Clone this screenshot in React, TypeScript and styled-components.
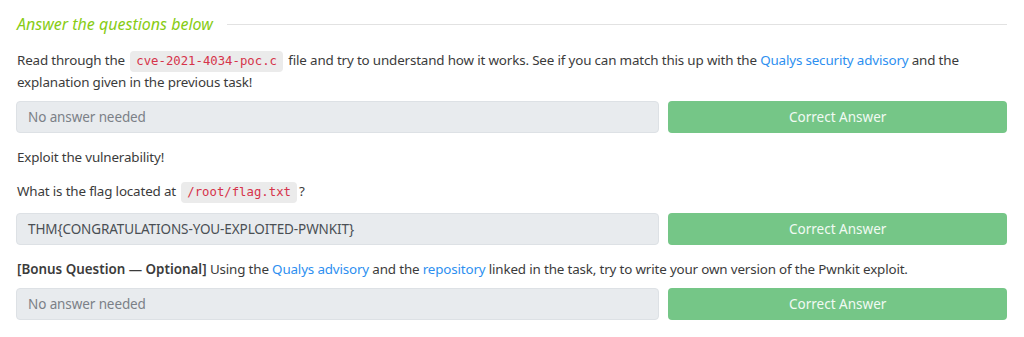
import React from "react";
import styled, { createGlobalStyle } from "styled-components";

const GlobalStyle = createGlobalStyle`
  body {
    margin: 0;
    background: #ffffff;
    font-family: "Noto Sans", "Open Sans", sans-serif;
    color: #3b3b3b;
  }
`;

const Wrapper = styled.div`
  padding: 14px 17px 0 16px;
`;

const HeadingRow = styled.div`
  display: flex;
  align-items: center;
  gap: 14px;
  height: 20px;
  margin-bottom: 15px;
`;

const Heading = styled.h5`
  margin: 0 0 0 1px;
  font-size: 16px;
  font-weight: 400;
  font-style: italic;
  color: #88cc14;
  white-space: nowrap;
`;

const Rule = styled.div`
  flex: 1;
  height: 1px;
  background: #e2e2e2;
`;

const Question = styled.p<{ $gap?: number }>`
  margin: 0 0 ${(p) => (p.$gap ?? 9)}px 1px;
  font-size: 13.4px;
  letter-spacing: -0.16px;
  line-height: 22px;
`;

const Strong = styled.span`
  font-weight: 600;
  letter-spacing: 0;
`;

const Code = styled.code`
  font-family: "DejaVu Sans Mono", "Liberation Mono", monospace;
  font-size: 12.3px;
  letter-spacing: 0;
  line-height: 1;
  color: #d6334a;
  background: #ebebeb;
  border-radius: 4px;
  padding: 3px 6px 4px;
  margin: 0 2px;
`;

const Link = styled.a`
  color: #2d8ff0;
  text-decoration: none;
`;

const AnswerRow = styled.div`
  display: grid;
  grid-template-columns: minmax(0, 1.9fr) minmax(0, 1fr);
  gap: 9px;
  margin-bottom: 13px;
`;

const AnswerBox = styled.div<{ $filled?: boolean }>`
  height: 32px;
  box-sizing: border-box;
  display: flex;
  align-items: center;
  padding: 0 11px;
  background: #e8ebee;
  border: 1px solid #dde1e5;
  border-radius: 4px;
  font-size: 13.5px;
  letter-spacing: -0.1px;
  color: ${(p) => (p.$filled ? "#4a4f54" : "#7b8087")};
`;

const CorrectButton = styled.div`
  height: 32px;
  display: flex;
  align-items: center;
  justify-content: center;
  background: #75c687;
  border-radius: 4px;
  font-size: 13.5px;
  color: #f1faf3;
`;

function Answer({ value, filled }: { value: string; filled?: boolean }) {
  return (
    <AnswerRow>
      <AnswerBox $filled={filled}>{value}</AnswerBox>
      <CorrectButton>Correct Answer</CorrectButton>
    </AnswerRow>
  );
}

export default function App() {
  return (
    <Wrapper>
      <GlobalStyle />
      <HeadingRow>
        <Heading>Answer the questions below</Heading>
        <Rule />
      </HeadingRow>

      <Question $gap={8}>
        Read through the <Code>cve-2021-4034-poc.c</Code> file and try to
        understand how it works. See if you can match this up with the{" "}
        <Link>Qualys security advisory</Link> and the explanation given in the
        previous task!
      </Question>
      <Answer value="No answer needed" />

      <Question $gap={12}>Exploit the vulnerability!</Question>
      <Question $gap={11}>
        What is the flag located at <Code>/root/flag.txt</Code>?
      </Question>
      <Answer value="THM{CONGRATULATIONS-YOU-EXPLOITED-PWNKIT}" filled />

      <Question $gap={8}>
        <Strong>[Bonus Question — Optional]</Strong> Using the{" "}
        <Link>Qualys advisory</Link> and the <Link>repository</Link> linked in
        the task, try to write your own version of the Pwnkit exploit.
      </Question>
      <Answer value="No answer needed" />
    </Wrapper>
  );
}
